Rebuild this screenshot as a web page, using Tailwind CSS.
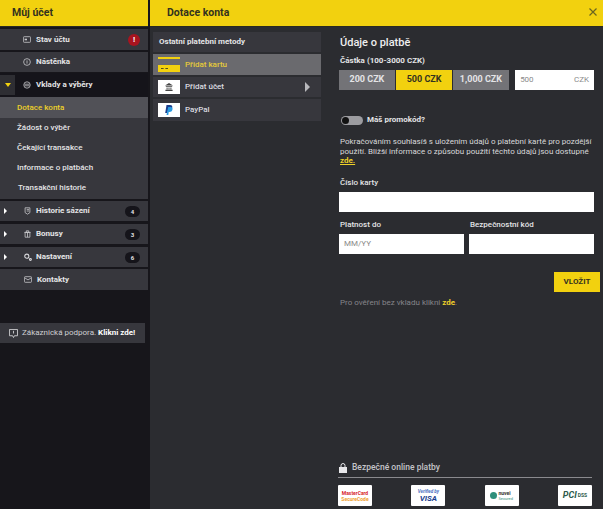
<!DOCTYPE html>
<html lang="cs">
<head>
  <meta charset="UTF-8">
  <title>Můj účet</title>
  <script src="https://cdn.jsdelivr.net/npm/@tailwindcss/browser@4"></script>
</head>
<body class="w-[603px] h-[509px] overflow-hidden flex bg-[#17161b] font-['Roboto',sans-serif] text-[#e4e4e6]">

  <!-- SIDEBAR -->
  <aside class="w-[148px] h-full shrink-0 flex flex-col">
    <div class="h-[27px] bg-[#f2d10f] border-b border-[#2a2a20] pl-3 flex items-center text-[10.5px] font-bold text-[#33321f] shrink-0">Můj účet</div>
    <div class="mt-[2px] h-[21px] bg-[#37373d] flex items-center pl-[23px] pr-2 text-[8px] font-bold">
      <svg class="w-[8px] h-[7px] mr-[5px]" viewBox="0 0 10 8" fill="none" stroke="#c8c8cc"><rect x=".5" y=".5" width="9" height="7" rx="1"/><rect x="2" y="3" width="3" height="2" fill="#c8c8cc" stroke="none"/></svg>
      <span>Stav účtu</span>
      <span class="ml-auto w-[12px] h-[12px] rounded-full bg-[#a8141f] text-white text-[8px] flex items-center justify-center">!</span>
    </div>
    <div class="mt-[2px] h-[20px] bg-[#37373d] flex items-center pl-[23px] text-[8px] font-bold">
      <svg class="w-[8px] h-[8px] mr-[5px]" viewBox="0 0 10 10" fill="none" stroke="#c8c8cc"><circle cx="5" cy="5" r="4.2"/><path d="M5 3v4"/></svg>
      <span>Nástěnka</span>
    </div>
    <div class="mt-[1px] h-[24px] bg-[#15141a] flex items-center text-[8px] font-bold">
      <span class="w-[15px] h-[20px] bg-[#2e2e33] flex items-center justify-center mr-[8px]"><span class="border-x-[3px] border-x-transparent border-t-[4px] border-t-[#f2d10f]"></span></span>
      <svg class="w-[8px] h-[8px] mr-[5px]" viewBox="0 0 10 10" fill="none" stroke="#c8c8cc"><circle cx="5" cy="5" r="4"/><path d="M2 4h6M2 6h6"/></svg>
      <span>Vklady a výběry</span>
    </div>
    <div class="bg-[#37373d] h-[102px] text-[8px] font-medium flex flex-col">
      <div class="h-[21px] bg-[#515157] pl-[17px] flex items-center text-[#edd02a]">Dotace konta</div>
      <div class="h-[20px] pl-[17px] flex items-center">Žádost o výběr</div>
      <div class="h-[20px] pl-[17px] flex items-center">Čekající transakce</div>
      <div class="h-[20px] pl-[17px] flex items-center">Informace o platbách</div>
      <div class="h-[20px] pl-[18px] flex items-center">Transakční historie</div>
    </div>
    <div class="mt-[2px] h-[20px] bg-[#37373d] flex items-center text-[8px] font-bold pr-2">
      <span class="ml-[4px] mr-[17px] border-y-[3px] border-y-transparent border-l-[3px] border-l-white"></span>
      <svg class="w-[7px] h-[8px] mr-[5px]" viewBox="0 0 8 10" fill="none" stroke="#c8c8cc"><path d="M1 1h6v6l-3 2-3-2zM3 3h3M3 5h3"/></svg>
      <span>Historie sázení</span>
      <span class="ml-auto w-[15px] h-[11px] rounded-full bg-[#15141a] text-[6px] flex items-center justify-center">4</span>
    </div>
    <div class="mt-[3px] h-[20px] bg-[#37373d] flex items-center text-[8px] font-bold pr-2">
      <span class="ml-[4px] mr-[17px] border-y-[3px] border-y-transparent border-l-[3px] border-l-white"></span>
      <svg class="w-[7px] h-[8px] mr-[5px]" viewBox="0 0 8 10" fill="none" stroke="#c8c8cc"><path d="M1 3h6v6H1zM0 3h8M4 3v6M2.500 1h3v2h-3z"/></svg>
      <span>Bonusy</span>
      <span class="ml-auto w-[15px] h-[11px] rounded-full bg-[#15141a] text-[6px] flex items-center justify-center">3</span>
    </div>
    <div class="mt-[3px] h-[20px] bg-[#37373d] flex items-center text-[8px] font-bold pr-2">
      <span class="ml-[4px] mr-[17px] border-y-[3px] border-y-transparent border-l-[3px] border-l-white"></span>
      <svg class="w-[8px] h-[8px] mr-[4px]" viewBox="0 0 10 10" fill="none" stroke="#d8d8dc" stroke-width="1.3"><circle cx="3.500" cy="4" r="2.600"/><circle cx="8" cy="8" r="1.200"/></svg>
      <span>Nastavení</span>
      <span class="ml-auto w-[15px] h-[11px] rounded-full bg-[#15141a] text-[6px] flex items-center justify-center">6</span>
    </div>
    <div class="mt-[2px] h-[21px] bg-[#37373d] flex items-center pl-[24px] text-[8px] font-bold">
      <svg class="w-[8px] h-[7px] mr-[5px]" viewBox="0 0 10 8" fill="none" stroke="#c8c8cc"><rect x=".5" y=".5" width="9" height="7" rx="1"/><path d="M1 2l4 2.500L9 2"/></svg>
      <span>Kontakty</span>
    </div>
    <div class="mt-[33px] mr-[3px] h-[20px] bg-[#37373d] flex items-center pl-[9px] text-[8px]">
      <svg class="w-[9px] h-[9px] mr-[4px]" viewBox="0 0 10 10" fill="none" stroke="#d0d0d4"><path d="M.5.5h9v7H6L5 9.500 4 7.500H.5zM5 2v3"/></svg>
      <span class="text-[#cfcfd3]">Zákaznická podpora.&nbsp;<b class="text-white">Klikni zde!</b></span>
    </div>
  </aside>

  <!-- MAIN -->
  <main class="ml-[2px] w-[453px] h-full flex flex-col bg-[#2b2c30]">
    <header class="h-[27px] bg-[#f2d10f] border-b border-[#2a2a20] flex items-center pl-[17px] pr-[6px] text-[10.5px] font-bold text-[#33321f] shrink-0">
      <span>Dotace konta</span>
      <svg class="ml-auto mb-[3px] w-[8px] h-[8px]" viewBox="0 0 8 8" stroke="#6b6620" stroke-width="1.2"><path d="M.5.5l7 7M7.500.5l-7 7"/></svg>
    </header>
    <div class="flex flex-1 min-h-0">

      <!-- METODY -->
      <section class="w-[171px] pl-[3px] pt-[5px] shrink-0">
        <div class="h-[20px] bg-[#37373d] pl-[6px] flex items-center text-[8px] font-bold">Ostatní platební metody</div>
        <div class="mt-[2px] h-[21px] bg-[#6a6a6e] flex items-center text-[8px] text-[#e6cb3a] font-medium">
          <span class="ml-[5px] mr-[5px] w-[22px] h-[15px] flex flex-col justify-between">
            <span class="h-[2px] bg-[#f2d10f]"></span>
            <span class="h-[7px] bg-[#f2d10f] flex items-center pl-[3px]"><span class="w-[7px] border-t border-dashed border-[#55501c]"></span></span>
          </span>
          Přidat kartu
        </div>
        <div class="mt-[2px] h-[20px] bg-[#37373d] flex items-center text-[8px] font-medium text-[#dcdce0]">
          <span class="ml-[5px] mr-[5px] w-[22px] h-[14px] bg-white flex items-center justify-center">
            <svg class="w-[8px] h-[8px]" viewBox="0 0 10 10" fill="#444"><path d="M5 0L0 3h10zM1 4h8v1H1zM2 5.500h1.200v2.500H2zM4.400 5.500h1.200v2.500H4.400zM6.800 5.500H8v2.500H6.800zM.5 8.500h9V10h-9z"/></svg>
          </span>
          Přidat účet
          <span class="ml-auto mr-[11px] border-y-[5px] border-y-transparent border-l-[5px] border-l-[#b8b8bc]"></span>
        </div>
        <div class="mt-[2px] h-[22px] bg-[#37373d] flex items-center text-[8px] font-medium text-[#dcdce0]">
          <span class="ml-[5px] mr-[5px] w-[22px] h-[14px] bg-white flex items-center justify-center">
            <svg class="w-[8px] h-[10px]" viewBox="0 0 8 10"><path fill="#1b3f8f" d="M1.500 0H5c2 0 2.600 1.400 2.200 2.700C6.800 4.300 5.600 5 4 5H3L2.500 8H.2z"/><path fill="#2a9be0" d="M3.200 2H6c1.500.3 1.800 1.500 1.400 2.800C7 6.200 6 7 4.500 7h-.8L3.300 10H1.500z"/></svg>
          </span>
          PayPal
        </div>
      </section>

      <!-- FORMULAR -->
      <section class="w-[282px] min-w-0 pl-[18px] pr-[9px] flex flex-col">
        <h2 class="mt-[9px] pl-[1px] text-[11px] leading-[14px] font-medium text-[#eeeeef]">Údaje o platbě</h2>
        <p class="mt-[6px] pl-[1px] text-[8px] leading-[10px] font-bold">Částka (100-3000 CZK)</p>
        <div class="mt-[4px] flex gap-[1.500px]">
          <span class="w-[56px] h-[20px] bg-[#737377] flex items-center justify-center text-[9px] font-bold">200 CZK</span>
          <span class="w-[55.500px] h-[20px] bg-[#f2d10f] flex items-center justify-center text-[9px] font-bold text-[#33321f]">500 CZK</span>
          <span class="w-[55.500px] h-[20px] bg-[#737377] flex items-center justify-center text-[9px] font-bold">1,000 CZK</span>
          <span class="ml-[5px] w-[79px] h-[20px] bg-white flex items-center justify-between px-[5px] text-[8px] text-[#8a8a8a]"><span>500</span><span>CZK</span></span>
        </div>
        <div class="mt-[25px] h-[10px] ml-[2px] flex items-center gap-[4px]">
          <span class="w-[22px] h-[9px] rounded-full bg-[#9c9ca0] flex items-center pl-[1px]"><span class="w-[7px] h-[7px] rounded-full bg-[#111]"></span></span>
          <span class="text-[8px] font-bold">Máš promokód?</span>
        </div>
        <p class="mt-[12px] pl-[1px] -mr-[9px] text-[8px] leading-[9.500px] text-[#d8d8da]">Pokračováním souhlasíš s uložením údajů o platební kartě pro pozdější použití. Bližší informace o způsobu použití těchto údajů jsou dostupné <a class="font-bold text-[#edd02a] underline">zde.</a></p>

        <label class="mt-[12px] pl-[1px] text-[8px] leading-[10px] font-medium">Číslo karty</label>
        <div class="mt-[4px] h-[20px] bg-white"></div>
        <div class="mt-[8px] flex justify-between">
          <div class="w-[125px]">
            <label class="block pl-[1px] text-[8px] leading-[10px] font-medium">Platnost do</label>
            <div class="mt-[4px] h-[20px] bg-white px-[5px] flex items-center text-[8px] text-[#8a8a8a]">MM/YY</div>
          </div>
          <div class="w-[125px]">
            <label class="block pl-[1px] text-[8px] leading-[10px] font-medium">Bezpečnostní kód</label>
            <div class="mt-[4px] h-[20px] bg-white"></div>
          </div>
        </div>
        <div class="mt-[18px] flex justify-end -mr-[6px]">
          <span class="w-[46px] h-[20px] bg-[#f2d10f] flex items-center justify-center text-[8px] font-bold text-[#33321f]">VLOŽIT</span>
        </div>
        <p class="mt-[6px] pl-[1px] text-[8px] leading-[10px] text-[#85858a]">Pro ověření bez vkladu klikni <b class="text-[#edd02a]">zde</b>.</p>

        <div class="mt-auto -ml-[1px] mr-[2px]">
          <div class="h-[20px] pl-[1px] flex items-center gap-[5px] border-b border-[#8a8a8e] text-[8.500px] text-[#c4c4c8] font-medium">
            <svg class="w-[8px] h-[10px]" viewBox="0 0 8 10"><path fill="#e8e8ea" d="M0 4h8v6H0z"/><path fill="none" stroke="#e8e8ea" d="M2 4V2.500a2 2 0 014 0V4"/></svg>
            Bezpečné online platby
          </div>
          <div class="mt-[7px] flex justify-between pb-[3px]">
            <span class="w-[34px] h-[21px] bg-white rounded-[1px] flex flex-col items-center justify-center text-[5px] leading-[6px] font-bold"><span class="text-[#d8262c]">MasterCard</span><span class="text-[#f0a030]">SecureCode</span></span>
            <span class="w-[34px] h-[21px] bg-white rounded-[1px] flex flex-col items-center justify-center font-bold italic"><span class="text-[4.500px] leading-[6px] text-[#4a6fc0]">Verified by</span><span class="text-[8px] leading-[8px] text-[#1a3f8f]">VISA</span></span>
            <span class="w-[34px] h-[21px] bg-white rounded-[1px] flex items-center justify-center gap-[1px]"><span class="w-[7px] h-[7px] rounded-full bg-[#2f8f7a]"></span><span class="flex flex-col text-[5px] leading-[5px] font-bold text-[#333]">nuvei<span class="text-[4px] font-normal text-[#2f8f7a]">Secured</span></span></span>
            <span class="w-[34px] h-[21px] bg-white rounded-[1px] flex items-center justify-center gap-[1px] text-[#2c5a4a] font-bold"><span class="text-[9px] leading-[9px] italic">PCI</span><span class="text-[5px] leading-[5px]">DSS</span></span>
          </div>
        </div>
      </section>
    </div>
  </main>
</body>
</html>
